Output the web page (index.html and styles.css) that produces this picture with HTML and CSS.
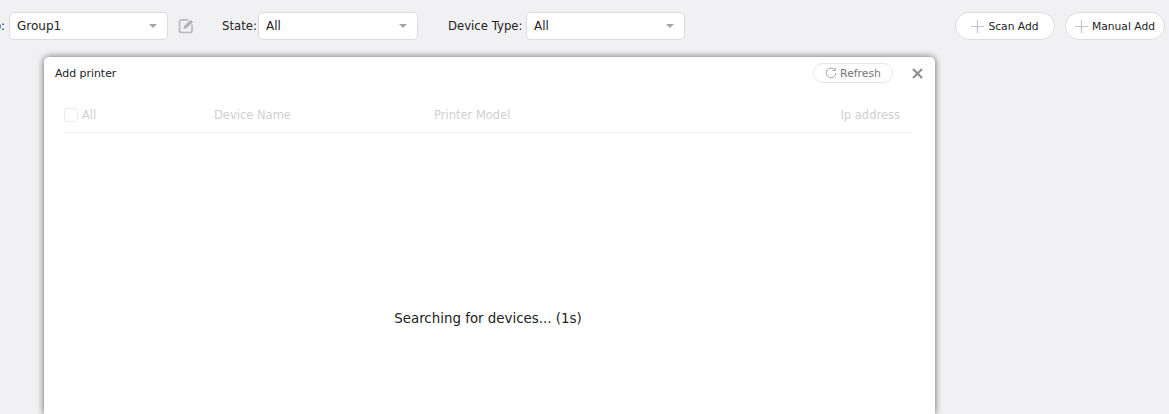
FILE: index.html
```html
<!DOCTYPE html>
<html lang="en">
<head>
<meta charset="utf-8">
<title>Add printer</title>
<link rel="stylesheet" href="styles.css">
</head>
<body>
<div class="toolbar">
  <span class="label label-group">Group:</span>
  <div class="select select-group"><span>Group1</span><i class="caret"></i></div>
  <svg class="edit" width="16" height="16" viewBox="0 0 16 16" fill="none">
    <path d="M10 1.800H3.500A2 2 0 0 0 1.500 3.800V12.500A2 2 0 0 0 3.500 14.500H12A2 2 0 0 0 14 12.500V6.500" stroke="#b9b9bd" stroke-width="1.700"/>
    <path d="M5.500 10.800L6.200 8L12.500 1.700L15 4.200L8.500 10.200Z" fill="#b2b2b6"/>
  </svg>
  <span class="label label-state">State:</span>
  <div class="select select-state"><span>All</span><i class="caret"></i></div>
  <span class="label label-type">Device Type:</span>
  <div class="select select-type"><span>All</span><i class="caret"></i></div>
  <div class="actions">
    <button class="pill"><svg width="13" height="13" viewBox="0 0 13 13"><path d="M6.500 0V13M0 6.500H13" stroke="#c4c4c8" stroke-width="1.200"/></svg>Scan Add</button>
    <button class="pill"><svg width="13" height="13" viewBox="0 0 13 13"><path d="M6.500 0V13M0 6.500H13" stroke="#c4c4c8" stroke-width="1.200"/></svg>Manual Add</button>
  </div>
</div>
<div class="modal">
  <div class="modal-head">
    <span class="modal-title">Add printer</span>
    <button class="refresh"><svg width="12" height="12" viewBox="0 0 12 12" fill="none"><path d="M9.900 3.100A4.800 4.800 0 1 0 10.800 6" stroke="#a9a9ad" stroke-width="1"/><path d="M10.300 0.600V3.600H7.300" stroke="#a9a9ad" stroke-width="1"/></svg>Refresh</button>
    <svg class="close" width="11" height="11" viewBox="0 0 11 11"><path d="M1 1L10 10M10 1L1 10" stroke="#8e8e92" stroke-width="2.200"/></svg>
  </div>
  <div class="table-head">
    <div class="col col-all"><i class="check"></i>All</div>
    <div class="col col-name">Device Name</div>
    <div class="col col-model">Printer Model</div>
    <div class="col col-ip">Ip address</div>
  </div>
  <div class="searching">Searching for devices... (1s)</div>
</div>
</body>
</html>
```
FILE: styles.css
```css
* { box-sizing: border-box; }
html, body { margin: 0; height: 100%; overflow: hidden; }
body {
  width: 1169px;
  height: 414px;
  background: #f1f1f3;
  font-family: "DejaVu Sans", sans-serif;
  color: #222;
  font-size: 12px;
}
.toolbar {
  display: flex;
  align-items: center;
  height: 28px;
  margin: 12px 0 0 -60px;
  width: 1229px;
}
.label { white-space: nowrap; font-size: 11.7px; }
.label-group { width: 65px; margin-right: 4px; text-align: right; }
.label-state { width: 32px; margin-left: 28px; margin-right: 4px; }
.label-type { width: 74px; margin-left: 30px; margin-right: 4px; }
.select {
  display: flex;
  align-items: center;
  justify-content: space-between;
  height: 28px;
  background: #fff;
  border: 1px solid #dcdce0;
  border-radius: 5px;
  padding: 0 10px 0 7px;
  font-size: 12px;
}
.select-group { width: 159px; }
.select-state { width: 160px; }
.select-type { width: 159px; }
.caret {
  width: 0;
  height: 0;
  border-left: 4.500px solid transparent;
  border-right: 4.500px solid transparent;
  border-top: 4.500px solid #a5a5a8;
}
.edit { margin-left: 10px; flex: none; }
.actions { display: flex; gap: 10px; margin-left: auto; margin-right: 4px; }
.pill {
  display: flex;
  align-items: center;
  justify-content: center;
  gap: 4px;
  width: 100px;
  height: 28px;
  padding: 0;
  background: #fff;
  border: 1px solid #dcdce0;
  border-radius: 14px;
  font: 10.700px "DejaVu Sans", sans-serif;
  color: #222;
}
.modal {
  position: absolute;
  left: 44px;
  top: 57px;
  width: 891px;
  height: 357px;
  background: #fff;
  border-radius: 5px 5px 0 0;
  box-shadow: 0 0 7px rgba(0, 0, 0, 0.6);
  padding: 0 23px 0 20px;
}
.modal-head {
  display: flex;
  align-items: center;
  height: 32px;
  margin-left: -9px;
  margin-right: -11px;
}
.modal-title { font-size: 10.900px; color: #222; }
.refresh {
  display: flex;
  align-items: center;
  justify-content: center;
  gap: 3px;
  margin-left: auto;
  width: 80px;
  height: 20px;
  padding: 0;
  background: #fff;
  border: 1px solid #e6e6e8;
  border-radius: 10px;
  font: 10.800px "DejaVu Sans", sans-serif;
  color: #76767a;
}
.close { margin-left: 19px; flex: none; }
.table-head {
  display: flex;
  align-items: center;
  height: 44px;
  padding-top: 8px;
  border-bottom: 1px solid #f2f2f4;
  color: #cfcfd3;
  font-size: 11.500px;
}
.col { white-space: nowrap; }
.col-all { display: flex; align-items: center; gap: 4px; width: 150px; }
.check {
  width: 14px;
  height: 14px;
  border: 1px solid #ececee;
  border-radius: 3px;
}
.col-name { width: 220px; }
.col-model { flex: 1; }
.col-ip { margin-right: 12px; }
.searching {
  margin-top: 178px;
  text-align: center;
  font-size: 13.400px;
  color: #222;
}
```
